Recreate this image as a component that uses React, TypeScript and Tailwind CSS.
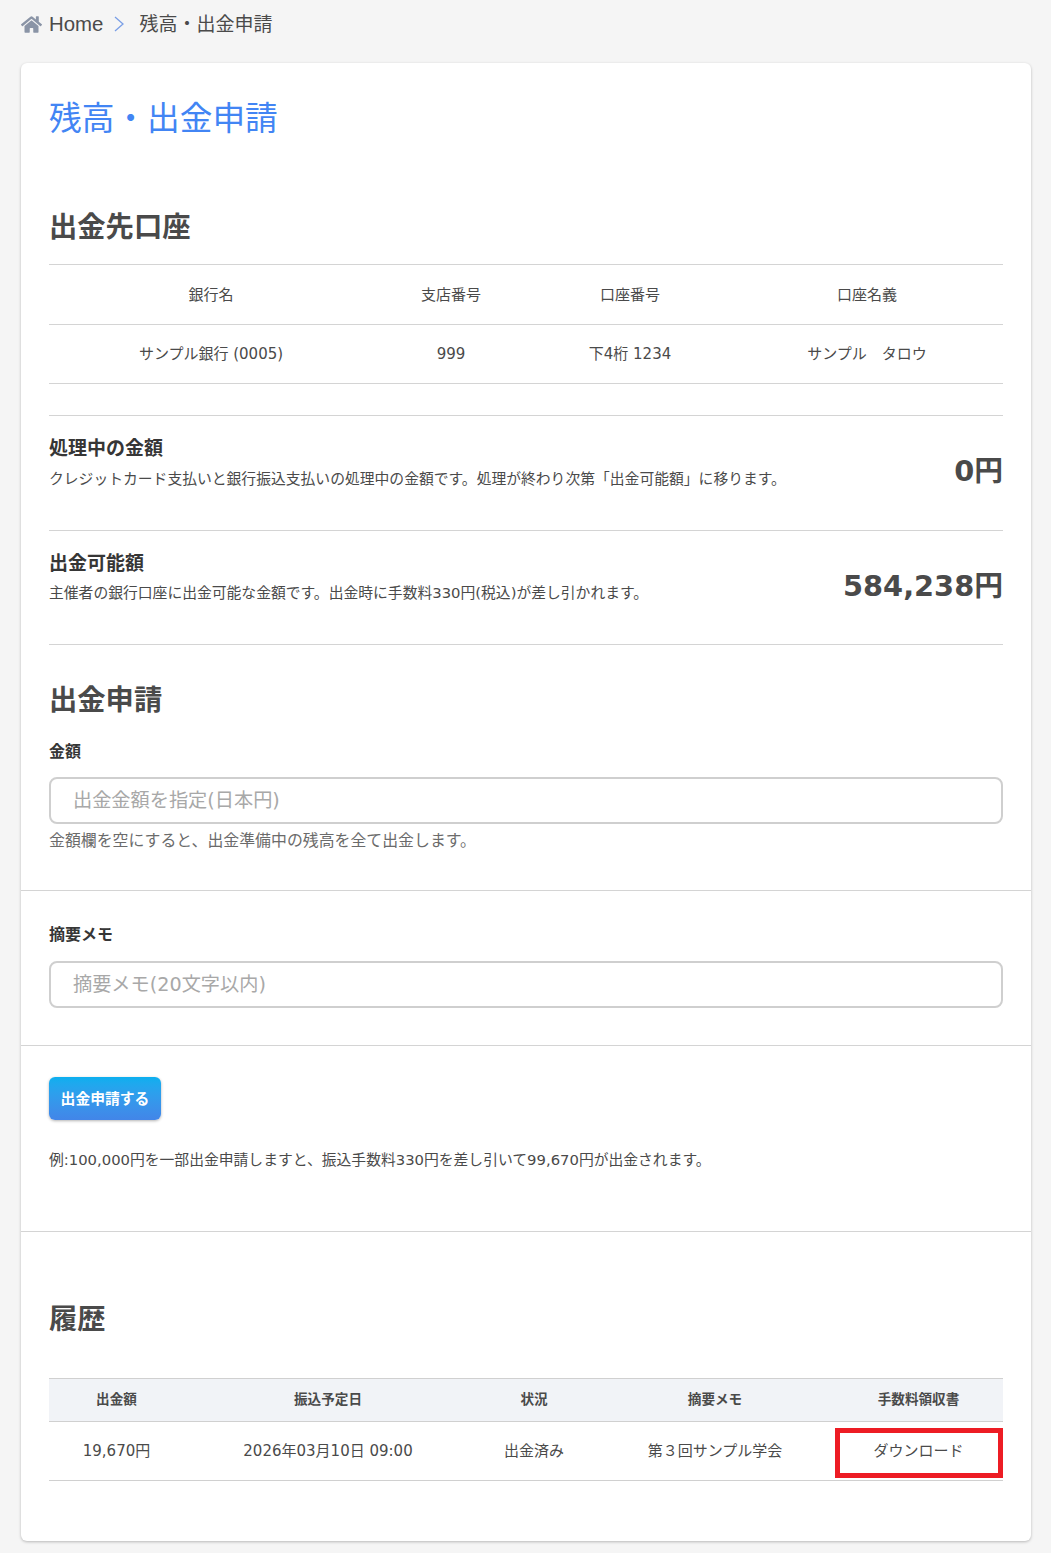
import { FaHome } from 'react-icons/fa'

const font = { fontFamily: '"DejaVu Sans", "Noto Sans CJK JP", sans-serif' }

const account = [
  { label: '銀行名', value: 'サンプル銀行 (0005)', width: 'w-[324px]' },
  { label: '支店番号', value: '999', width: 'w-[156px]' },
  { label: '口座番号', value: '下4桁 1234', width: 'w-[202px]' },
  { label: '口座名義', value: 'サンプル　タロウ', width: 'w-[272px]' },
]

const history = [
  { label: '出金額', value: '19,670円', width: 'w-[135px]' },
  { label: '振込予定日', value: '2026年03月10日 09:00', width: 'w-[288px]' },
  { label: '状況', value: '出金済み', width: 'w-[124px]' },
  { label: '摘要メモ', value: '第３回サンプル学会', width: 'w-[238px]' },
]

function Balance({ title, note, amount }: { title: string; note: string; amount: string }) {
  return (
    <div className="flex items-center justify-between border-t border-[#d4d4d4] h-[114.5px]">
      <div className="self-start pt-[19px]">
        <p className="text-[19px] font-bold leading-[26px] text-[#363636]">{title}</p>
        <p className="mt-[4.5px] text-[14.8px] leading-[26px] text-[#4a4a4a]">{note}</p>
      </div>
      <p className="pb-[2px] text-[28.8px] font-bold text-[#4a4a4a] leading-none">{amount}</p>
    </div>
  )
}

export default function App() {
  return (
    <div className="bg-[#f5f5f5] min-h-[1553px] pl-[21px] pr-[20px] pt-[12px] text-[#4a4a4a]" style={font}>
      {/* Breadcrumb */}
      <nav className="flex items-center h-[24px] text-[19px] text-[#4a4a4a]">
        <FaHome size={21} className="text-[#8a94a6]" />
        <span className="ml-[7px] font-['Liberation_Sans'] text-[20.4px]">Home</span>
        <svg width="12" height="18" viewBox="0 0 12 18" className="ml-[10px] text-[#7a9fe6]" fill="none" stroke="currentColor" strokeWidth="1.3">
          <path d="M2 2l8 7-8 7" />
        </svg>
        <span className="ml-[14px]">残高・出金申請</span>
      </nav>

      <main className="mt-[27px] bg-white rounded-[6px] shadow-[0_1px_3px_rgba(0,0,0,0.25)] h-[1478px]">
        <div className="px-[28px]">
          <h1 className="pt-[32px] text-[32.7px] leading-[48px] text-[#4285f4]">残高・出金申請</h1>
          <h2 className="mt-[65px] text-[28.3px] font-bold leading-[40px] text-[#4a4a4a]">出金先口座</h2>

          {/* Account table */}
          <div className="mt-[16px] border-t border-[#d4d4d4]">
            <div className="flex h-[60px] pt-[2px] items-center border-b border-[#d4d4d4] text-[15px]">
              {account.map((c) => (
                <span key={c.label} className={`${c.width} text-center`}>{c.label}</span>
              ))}
            </div>
            <div className="flex h-[59px] items-center border-b border-[#d4d4d4] text-[15px]">
              {account.map((c) => (
                <span key={c.label} className={`${c.width} text-center`}>{c.value}</span>
              ))}
            </div>
          </div>

          <div className="mt-[31px]">
            <Balance
              title="処理中の金額"
              note="クレジットカード支払いと銀行振込支払いの処理中の金額です。処理が終わり次第「出金可能額」に移ります。"
              amount="0円"
            />
            <Balance
              title="出金可能額"
              note="主催者の銀行口座に出金可能な金額です。出金時に手数料330円(税込)が差し引かれます。"
              amount="584,238円"
            />
          </div>

          <div className="border-t border-[#d4d4d4]">
            <h2 className="mt-[36px] text-[28.3px] font-bold leading-[40px]">出金申請</h2>
            <label className="block mt-[19px] text-[16px] font-bold leading-[24px] text-[#363636]">金額</label>
            <input
              placeholder="出金金額を指定(日本円)"
              className="mt-[13px] block w-full h-[47px] px-[22px] rounded-[8px] border-2 border-[#cfcfcf] text-[19.2px] placeholder:text-[#a8a8a8] outline-none"
            />
            <p className="mt-[4px] text-[15.9px] leading-[26px] text-[#6b6b6b]">金額欄を空にすると、出金準備中の残高を全て出金します。</p>
          </div>
        </div>

        <div className="mt-[36px] border-t border-[#d4d4d4] px-[28px] h-[155px]">
          <label className="block mt-[32px] text-[16px] font-bold leading-[24px] text-[#363636]">摘要メモ</label>
          <input
            placeholder="摘要メモ(20文字以内)"
            className="mt-[14px] block w-full h-[47px] px-[22px] rounded-[8px] border-2 border-[#cfcfcf] text-[19.2px] placeholder:text-[#a8a8a8] outline-none"
          />
        </div>

        <div className="border-t border-[#d4d4d4] px-[28px] h-[186px]">
          <button className="mt-[31px] block w-[112px] h-[43px] pt-[2px] rounded-[6px] bg-gradient-to-b from-[#0bafef] to-[#4285e8] text-white text-[14.8px] font-bold shadow-[0_1px_3px_rgba(0,0,0,0.3)]">
            出金申請する
          </button>
          <p className="mt-[27px] text-[14.8px] leading-[26px]">例:100,000円を一部出金申請しますと、振込手数料330円を差し引いて99,670円が出金されます。</p>
        </div>

        <div className="border-t border-[#d4d4d4] px-[28px]">
          <h2 className="mt-[68px] text-[28.3px] font-bold leading-[40px]">履歴</h2>

          {/* History table */}
          <div className="mt-[38px]">
            <div className="flex h-[44px] pb-[2px] items-center bg-[#f1f3f7] border-y border-[#d0d0d0] text-[13.6px] font-bold">
              {history.map((c) => (
                <span key={c.label} className={`${c.width} text-center`}>{c.label}</span>
              ))}
              <span className="w-[169px] text-center">手数料領収書</span>
            </div>
            <div className="flex h-[59px] items-center border-b border-[#d0d0d0] text-[15px]">
              {history.map((c) => (
                <span key={c.label} className={`${c.width} text-center`}>{c.value}</span>
              ))}
              <span className="relative w-[169px] h-full flex items-center justify-center">
                ダウンロード
                {/* red annotation box drawn over the cell */}
                <span className="absolute left-[1px] right-0 top-[6px] h-[50px] border-[5px] border-[#ed1c24]" />
              </span>
            </div>
          </div>
        </div>
      </main>
    </div>
  )
}
